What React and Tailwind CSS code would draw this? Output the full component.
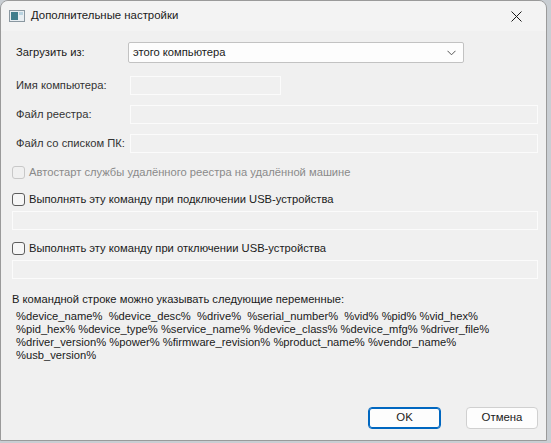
import { useState } from "react";

const font = { fontFamily: '"Segoe UI", "Liberation Sans", sans-serif' };

const Checkbox = ({ checked, disabled, onChange }) => (
  <span
    onClick={disabled ? undefined : onChange}
    className={`inline-block h-[13px] w-[13px] shrink-0 rounded-[3px] border ${
      disabled ? "border-[#c8c8c8] bg-[#f0f0f0]" : "border-[#5d5d5d] bg-[#f6f6f6]"
    }`}
  >
    {checked && (
      <svg viewBox="0 0 13 13" className="h-full w-full">
        <path d="M3 6.5l2.3 2.3L10 4" fill="none" stroke="#1b1b1b" strokeWidth="1.2" />
      </svg>
    )}
  </span>
);

// disabled edit box
const Field = ({ className }) => (
  <div className={`h-[19px] border border-[#fbfbfb] bg-[#f0f0f0] ${className}`} />
);

const App = () => {
  const [onConnect, setOnConnect] = useState(false);
  const [onDisconnect, setOnDisconnect] = useState(false);

  return (
    <div className="h-[443px] w-[551px] bg-[#c9ced3]" style={font}>
      <div className="flex h-[441px] w-[547px] flex-col overflow-hidden rounded-t-[8px] border border-[#9a9a9a] text-[11.2px] text-[#1a1a1a]">
        {/* title bar */}
        <div className="flex h-[30px] shrink-0 items-center bg-[#f3f3f3] pl-[8px] pr-[24px]">
          <svg width="16" height="14" viewBox="0 0 16 14" className="mr-[6px]">
            <rect x="0.5" y="1.5" width="15" height="11" fill="#e8eef2" stroke="#8a97a0" />
            <rect x="2" y="3" width="7" height="8" fill="#3f7d8c" />
            <rect x="10" y="3" width="4" height="3" fill="#b9d3e0" />
          </svg>
          <span className="text-[11.4px]">Дополнительные настройки</span>
          <svg width="11" height="11" viewBox="0 0 11 11" className="ml-auto">
            <path d="M0.5 0.5l10 10M10.5 0.5l-10 10" stroke="#1a1a1a" strokeWidth="1" />
          </svg>
        </div>

        {/* body */}
        <div className="flex flex-1 flex-col whitespace-nowrap bg-[#f0f0f0] pl-[11px] pr-[8px]">
          {/* load from */}
          <div className="mt-[11px] flex h-[21px] items-center">
            <span className="w-[116px] pl-[4px]">Загрузить из:</span>
            <div className="flex h-[21px] w-[336px] items-center rounded-[2px] border border-[#c2c2c2] bg-[#fdfdfd] pl-[4px] pr-[7px]">
              <span>этого компьютера</span>
              <svg width="9" height="6" viewBox="0 0 9 6" className="ml-auto">
                <path d="M0.5 0.8l4 4 4-4" fill="none" stroke="#555" strokeWidth="1" />
              </svg>
            </div>
          </div>

          <div className="mt-[13px] flex h-[19px] items-center">
            <span className="w-[118px] pl-[4px] text-[#333]">Имя компьютера:</span>
            <Field className="w-[151px]" />
          </div>

          <div className="mt-[10px] flex h-[19px] items-center">
            <span className="w-[118px] pl-[4px] text-[#333]">Файл реестра:</span>
            <Field className="flex-1" />
          </div>

          <div className="mt-[10px] flex h-[19px] items-center">
            <span className="w-[118px] pl-[4px] text-[#333]">Файл со списком ПК:</span>
            <Field className="flex-1" />
          </div>

          {/* autostart */}
          <div className="mt-[11px] flex h-[16px] items-center gap-[4px] text-[#8a8a8a]">
            <Checkbox disabled />
            <span>Автостарт службы удалённого реестра на удалённой машине</span>
          </div>

          <div className="mt-[11px] flex h-[16px] items-center gap-[4px]">
            <Checkbox checked={onConnect} onChange={() => setOnConnect(!onConnect)} />
            <span>Выполнять эту команду при подключении USB-устройства</span>
          </div>
          <Field className="mt-[4px]" />

          <div className="mt-[10px] flex h-[16px] items-center gap-[4px]">
            <Checkbox checked={onDisconnect} onChange={() => setOnDisconnect(!onDisconnect)} />
            <span>Выполнять эту команду при отключении USB-устройства</span>
          </div>
          <Field className="mt-[4px]" />

          {/* variables */}
          <div className="mt-[12px] leading-[16px]">
            В командной строке можно указывать следующие переменные:
          </div>
          <div className="mt-[3px] pl-[4px] leading-[13px]">
            <div>%device_name%&nbsp; %device_desc%&nbsp; %drive%&nbsp; %serial_number%&nbsp; %vid% %pid% %vid_hex%</div>
            <div>%pid_hex% %device_type% %service_name% %device_class% %device_mfg% %driver_file%</div>
            <div>%driver_version% %power% %firmware_revision% %product_name% %vendor_name%</div>
            <div>%usb_version%</div>
          </div>

          {/* buttons */}
          <div className="mt-auto mb-[11px] flex justify-end gap-[25px]">
            <button className="h-[22px] w-[73px] rounded-[4px] border border-[#0067c0] bg-[#fdfdfd] text-[11.4px] shadow-[inset_0_0_0_1px_#0067c0]">
              OK
            </button>
            <button className="h-[22px] w-[72px] rounded-[4px] border border-[#d0d0d0] bg-[#fdfdfd] text-[11.4px]">
              Отмена
            </button>
          </div>
        </div>
      </div>
    </div>
  );
};

export default App;
